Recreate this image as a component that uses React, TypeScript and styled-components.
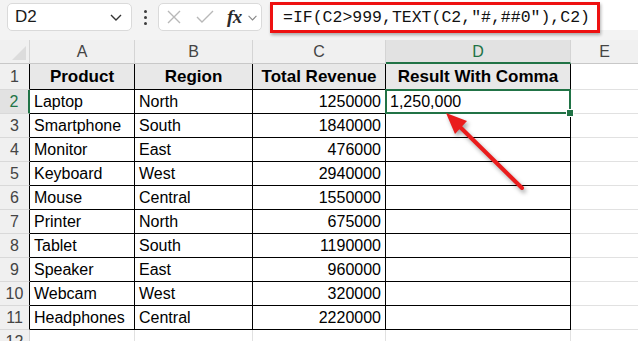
import React from 'react';
import styled, { createGlobalStyle, css } from 'styled-components';

const GlobalStyle = createGlobalStyle`
	html, body {
		margin: 0;
		padding: 0;
		background: #ffffff;
		overflow: hidden;
	}
	body {
		font-family: 'Liberation Sans', Arial, sans-serif;
		color: #000;
	}
`;

const GREEN = '#217346';
const GRID = '#e1e1e1';

const Page = styled.div`
	position: relative;
	width: 638px;
	height: 341px;
	overflow: hidden;
	background: #f3f3f3;
`;

const Toolbar = styled.div`
	display: flex;
	align-items: flex-start;
	height: 40px;
	padding-left: 7px;
	box-sizing: border-box;
	background: #f3f3f3;
`;

const NameBox = styled.div`
	display: flex;
	align-items: center;
	justify-content: space-between;
	width: 125px;
	height: 28px;
	margin-top: 3px;
	padding: 0 8px 0 7px;
	box-sizing: border-box;
	background: #fff;
	border: 1px solid #dadada;
	border-radius: 5px;
	font-size: 17px;
	color: #1a1a1a;
`;

const Dots = styled.div`
	display: flex;
	flex-direction: column;
	justify-content: center;
	gap: 3px;
	width: 26px;
	height: 34px;
	align-items: center;
	& > span {
		width: 3px;
		height: 3px;
		border-radius: 50%;
		background: #3c3c3c;
	}
`;

const FuncBox = styled.div`
	display: flex;
	align-items: center;
	width: 104px;
	height: 28px;
	margin-top: 3px;
	padding-left: 7px;
	box-sizing: border-box;
	background: #fff;
	border: 1px solid #dadada;
	border-radius: 5px;
	gap: 0;
`;

const Fx = styled.span`
	font-family: 'Liberation Serif', 'DejaVu Serif', serif;
	font-style: italic;
	font-weight: bold;
	font-size: 19px;
	color: #2a2a2a;
	margin-left: 12px;
	letter-spacing: -0.5px;
`;

const FormulaField = styled.div`
	flex: 1;
	height: 30px;
	margin-left: 8px;
	background: #fff;
	position: relative;
`;

const FormulaBox = styled.div`
	display: flex;
	align-items: center;
	width: 330px;
	height: 31px;
	margin-top: 2px;
	padding-left: 10px;
	box-sizing: border-box;
	border: 3px solid #ee1111;
	box-shadow: 1px 2px 3px rgba(0, 0, 0, 0.3);
	background: #fff;
	font-family: 'Liberation Mono', 'DejaVu Sans Mono', monospace;
	font-size: 16.5px;
	color: #111;
	white-space: nowrap;
`;

const Sheet = styled.div`
	display: grid;
	grid-template-columns: 30px 105px 118px 133px 185px 1fr;
	grid-template-rows: 24px 26px repeat(10, 24px) 24px;
	background: #fff;
`;

const CornerCell = styled.div`
	background: #f0f0f0;
	border-right: 1px solid #d4d4d4;
	border-bottom: 1px solid #c8c8c8;
	position: relative;
	&::after {
		content: '';
		position: absolute;
		right: 3px;
		bottom: 3px;
		width: 0;
		height: 0;
		border-left: 14px solid transparent;
		border-bottom: 14px solid #dcdcdc;
	}
`;

const ColHead = styled.div<{ $active?: boolean }>`
	display: flex;
	align-items: center;
	justify-content: center;
	background: #f0f0f0;
	border-right: 1px solid #d4d4d4;
	border-bottom: 1px solid #c8c8c8;
	font-size: 16px;
	color: #444;
	padding-top: 1px;
	box-sizing: border-box;
	${(p) =>
		p.$active &&
		css`
			background: #e2e2e2;
			color: ${GREEN};
			border-bottom: 2px solid ${GREEN};
		`}
`;

const RowHead = styled.div<{ $active?: boolean; $inTable?: boolean }>`
	display: flex;
	align-items: center;
	justify-content: center;
	background: #f0f0f0;
	border-right: 1px solid ${(p) => (p.$inTable ? '#000' : '#d4d4d4')};
	border-bottom: 1px solid #d9d9d9;
	font-size: 16px;
	color: #444;
	box-sizing: border-box;
	${(p) =>
		p.$active &&
		css`
			background: #e2e2e2;
			color: ${GREEN};
			border-right: 2px solid ${GREEN};
		`}
`;

const Cell = styled.div<{ $head?: boolean; $num?: boolean; $inTable?: boolean; $selected?: boolean }>`
	display: flex;
	align-items: center;
	justify-content: ${(p) => (p.$head ? 'center' : p.$num ? 'flex-end' : 'flex-start')};
	padding: 1px 4px 0;
	box-sizing: border-box;
	font-size: ${(p) => (p.$head ? '17px' : '16px')};
	font-weight: ${(p) => (p.$head ? 'bold' : 'normal')};
	white-space: nowrap;
	overflow: visible;
	background: ${(p) => (p.$head ? '#e8e8e8' : '#fff')};
	border-right: 1px solid ${(p) => (p.$inTable ? '#000' : GRID)};
	border-bottom: 1px solid ${(p) => (p.$inTable ? '#000' : GRID)};
	position: relative;
	${(p) =>
		p.$selected &&
		css`
			&::after {
				content: '';
				position: absolute;
				left: -1px;
				top: -1px;
				right: -1px;
				bottom: -1px;
				border: 2px solid ${GREEN};
				pointer-events: none;
			}
			&::before {
				content: '';
				position: absolute;
				right: -4px;
				bottom: -4px;
				width: 6px;
				height: 6px;
				background: ${GREEN};
				border: 1px solid #fff;
				z-index: 2;
			}
		`}
`;

const EdgeCell = styled.div<{ $last?: boolean }>`
	background: #fff;
	border-bottom: 1px solid ${GRID};
	border-right: ${(p) => (p.$last ? 'none' : `1px solid ${GRID}`)};
`;

const ArrowOverlay = styled.svg`
	position: absolute;
	left: 0;
	top: 0;
	pointer-events: none;
	filter: drop-shadow(2px 3px 2px rgba(0, 0, 0, 0.35));
`;

const rows: [string, string, number][] = [
	['Laptop', 'North', 1250000],
	['Smartphone', 'South', 1840000],
	['Monitor', 'East', 476000],
	['Keyboard', 'West', 2940000],
	['Mouse', 'Central', 1550000],
	['Printer', 'North', 675000],
	['Tablet', 'South', 1190000],
	['Speaker', 'East', 960000],
	['Webcam', 'West', 320000],
	['Headphones', 'Central', 2220000],
];

const ChevronDown = ({ size = 14, color = '#333' }: { size?: number; color?: string }) => (
	<svg width={size} height={size} viewBox="0 0 14 14">
		<polyline points="2,5 7,10 12,5" fill="none" stroke={color} strokeWidth="1.4" />
	</svg>
);

const App = () => {
	return (
		<Page>
			<GlobalStyle />
			<Toolbar>
				<NameBox>
					<span>D2</span>
					<ChevronDown />
				</NameBox>
				<Dots>
					<span />
					<span />
					<span />
				</Dots>
				<FuncBox>
					<svg width="16" height="16" viewBox="0 0 16 16">
						<path d="M2 2 L14 14 M14 2 L2 14" stroke="#b8b8b8" strokeWidth="1.4" fill="none" />
					</svg>
					<svg width="20" height="16" viewBox="0 0 20 16" style={{ marginLeft: 13 }}>
						<polyline points="2,8 7,13 18,2" stroke="#b8b8b8" strokeWidth="1.4" fill="none" />
					</svg>
					<Fx>fx</Fx>
					<span style={{ marginLeft: 5, display: 'flex' }}>
						<ChevronDown size={11} color="#888" />
					</span>
				</FuncBox>
				<FormulaField>
					<FormulaBox>=IF(C2&gt;999,TEXT(C2,"#,##0"),C2)</FormulaBox>
				</FormulaField>
			</Toolbar>

			<Sheet>
				<CornerCell />
				<ColHead>A</ColHead>
				<ColHead>B</ColHead>
				<ColHead>C</ColHead>
				<ColHead $active>D</ColHead>
				<ColHead style={{ borderRight: 'none' }}>E</ColHead>

				<RowHead $inTable>1</RowHead>
				<Cell $head $inTable>Product</Cell>
				<Cell $head $inTable>Region</Cell>
				<Cell $head $inTable>Total Revenue</Cell>
				<Cell $head $inTable>Result With Comma</Cell>
				<EdgeCell $last />

				{rows.map(([product, region, revenue], i) => (
					<React.Fragment key={product}>
						<RowHead $inTable $active={i === 0}>
							{i + 2}
						</RowHead>
						<Cell $inTable>{product}</Cell>
						<Cell $inTable>{region}</Cell>
						<Cell $inTable $num>
							{revenue}
						</Cell>
						<Cell $inTable $selected={i === 0}>
							{i === 0 ? revenue.toLocaleString('en-US') : ''}
						</Cell>
						<EdgeCell $last />
					</React.Fragment>
				))}

				<RowHead>12</RowHead>
				<EdgeCell />
				<EdgeCell />
				<EdgeCell />
				<EdgeCell />
				<EdgeCell $last />
			</Sheet>

			<ArrowOverlay width="638" height="341" viewBox="0 0 638 341">
				<line x1="522" y1="188" x2="459" y2="126" stroke="#ea1c1c" strokeWidth="4" strokeLinecap="round" />
				<polygon points="446,113 467,121 455,134" fill="#ea1c1c" />
			</ArrowOverlay>
		</Page>
	);
};

export default App;
